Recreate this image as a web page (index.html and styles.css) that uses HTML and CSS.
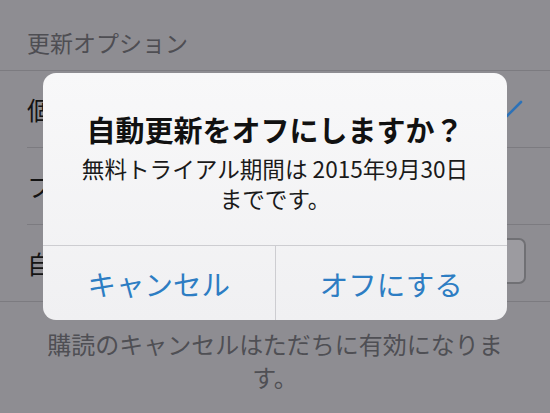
FILE: index.html
```html
<!DOCTYPE html>
<html lang="ja">
<head>
<meta charset="utf-8">
<title>更新オプション</title>
<link rel="stylesheet" href="styles.css">
</head>
<body>
<div class="screen">
  <div class="section-header">更新オプション</div>
  <div class="list">
    <div class="row">
      <div class="row-inner">
        <span class="row-label">個人</span>
        <svg class="check" width="24" height="18" viewBox="0 0 24 18"><path d="M2 10 L8 16 L22 2" fill="none" stroke="#2d72b8" stroke-width="2.6" stroke-linecap="round" stroke-linejoin="round"/></svg>
      </div>
    </div>
    <div class="row">
      <div class="row-inner">
        <span class="row-label">ファミリー</span>
      </div>
    </div>
    <div class="row last">
      <div class="row-inner">
        <span class="row-label">自動更新</span>
        <span class="switch"></span>
      </div>
    </div>
  </div>
  <div class="footer-note">購読のキャンセルはただちに有効になります。</div>

  <div class="alert">
    <div class="alert-body">
      <div class="alert-title">自動更新をオフにしますか？</div>
      <div class="alert-message">無料トライアル期間は 2015年9月30日<br>までです。</div>
    </div>
    <div class="alert-buttons">
      <div class="alert-btn">キャンセル</div>
      <div class="alert-btn">オフにする</div>
    </div>
  </div>
</div>
</body>
</html>
```
FILE: styles.css
```css
html, body {
  margin: 0;
  padding: 0;
}
body {
  background: #8e8d92;
  font-family: "Noto Sans CJK JP", "Noto Sans", sans-serif;
  width: 550px;
  height: 413px;
  overflow: hidden;
}
.screen {
  position: relative;
  width: 550px;
  height: 413px;
}
.section-header {
  height: 70px;
  box-sizing: border-box;
  padding: 27px 0 0 27px;
  font-size: 23px;
  line-height: 30px;
  color: #4e4e53;
}
.list {
  border-top: 1px solid #7c7b80;
  border-bottom: 1px solid #7c7b80;
}
.row {
  padding-left: 27px;
}
.row-inner {
  height: 76px;
  display: flex;
  align-items: center;
  justify-content: space-between;
  border-bottom: 1px solid #7c7b80;
  padding-right: 26px;
}
.row.last .row-inner {
  border-bottom: none;
}
.row-label {
  font-size: 25px;
  color: #141414;
}
.check {
  display: block;
  margin-right: 1px;
}
.switch {
  display: block;
  width: 60px;
  height: 46px;
  box-sizing: border-box;
  border: 2px solid #707074;
  border-radius: 7px;
  background: #9c9ba0;
  margin-top: -5px;
  margin-right: -2px;
}
.footer-note {
  padding: 25px 44px 0;
  font-size: 24px;
  line-height: 33px;
  color: #4f4f54;
  text-align: center;
}
.alert {
  position: absolute;
  left: 43px;
  top: 73px;
  width: 464px;
  height: 247px;
  border-radius: 13px;
  background: linear-gradient(#f8f8f9, #f0f0f2);
  display: flex;
  flex-direction: column;
  overflow: hidden;
}
.alert-body {
  height: 172px;
  box-sizing: border-box;
  padding-top: 39px;
  text-align: center;
}
.alert-title {
  font-size: 29px;
  font-weight: bold;
  line-height: 35px;
  color: #111;
}
.alert-message {
  margin-top: 7px;
  font-size: 22.6px;
  line-height: 30px;
  color: #1a1a1a;
}
.alert-buttons {
  flex: 1;
  display: flex;
  border-top: 1px solid #cdcdd1;
}
.alert-btn {
  flex: 1;
  display: flex;
  align-items: center;
  justify-content: center;
  font-size: 28.5px;
  color: #2d7dc3;
}
.alert-btn + .alert-btn {
  border-left: 1px solid #cdcdd1;
}
```
